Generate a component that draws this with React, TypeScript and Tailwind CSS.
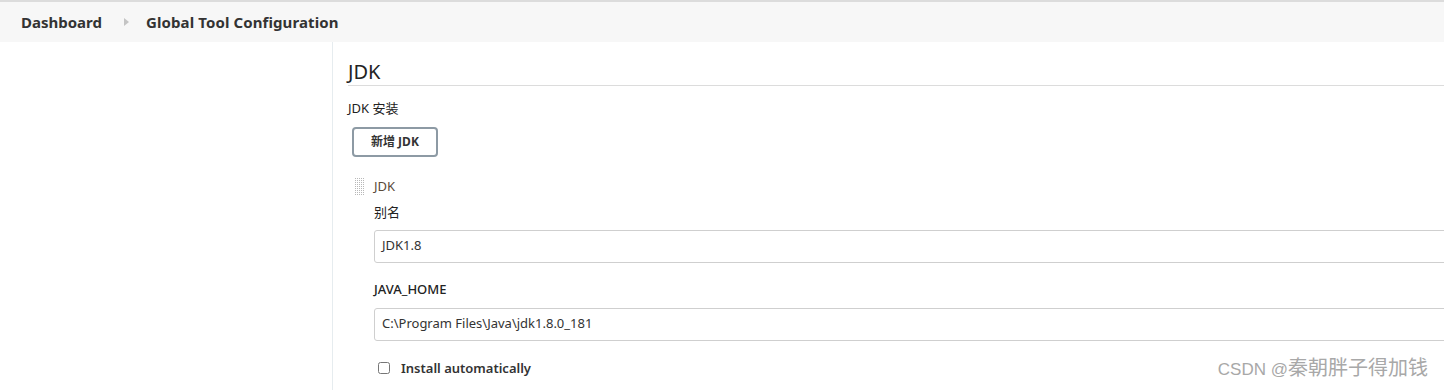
import { useState } from 'react';

/**
 * Global Tool Configuration — JDK section
 */
const font = "font-['Noto_Sans','Noto_Sans_CJK_SC',sans-serif]";

function DragHandle() {
  const dots = [];
  for (let r = 0; r < 9; r++) {
    for (let c = 0; c < 5; c++) {
      dots.push(<rect key={`${r}-${c}`} x={c * 2} y={r * 2} width={1} height={1} fill="#b8b8b8" />);
    }
  }
  return (
    <svg width="10" height="18" viewBox="0 0 10 18" className="shrink-0">
      {dots}
    </svg>
  );
}

export default function App() {
  const [auto, setAuto] = useState(false);

  return (
    <div className={`${font} relative w-[1444px] h-[390px] overflow-hidden bg-white text-[#333]`}>
      {/* Breadcrumb bar */}
      <header className="h-[42px] border-t-2 border-[#dcdcdc] bg-[#f7f7f7] flex items-center pl-[21px]">
        <span className="text-[15px] font-bold text-[#333]">Dashboard</span>
        <svg width="5" height="8" viewBox="0 0 5 8" className="ml-[22px] mr-[17px]">
          <path d="M0 0 L5 4 L0 8 Z" fill="#c4c4c4" />
        </svg>
        <span className="text-[15px] font-bold tracking-[0.1px] text-[#333]">Global Tool Configuration</span>
      </header>

      <div className="flex h-[348px]">
        {/* Side panel */}
        <aside className="w-[333px] shrink-0 border-r border-[#e6ecef]" />

        {/* Main */}
        <main className="flex-1 pl-[15px] pt-[17px]">
          <h2 className="text-[20px] leading-[26px] text-[#222] border-b border-[#dcdcdc]">JDK</h2>

          <div className="mt-[13px] text-[13px] leading-[18px] text-[#222]">JDK 安装</div>

          <button className="mt-[10px] ml-[4px] h-[30px] px-[17px] rounded-[4px] border-2 border-[#8d9aa4] bg-white text-[12px] font-bold text-[#333]">
            新增 JDK
          </button>

          <div className="mt-[20px] ml-[7px] flex items-center gap-[9px]">
            <DragHandle />
            <span className="text-[13px] text-[#5a4a3a]">JDK</span>
          </div>

          <div className="ml-[26px]">
            <div className="mt-[6px] text-[13px] leading-[18px] text-[#222]">别名</div>
            <div className="mt-[9px] -mr-[20px] h-[33px] border border-[#cfcfcf] rounded-[3px] flex items-center pl-[7px] text-[13px] text-[#333]">
              JDK1.8
            </div>

            <div className="mt-[17px] text-[13px] leading-[18px] font-medium text-[#222]">JAVA_HOME</div>
            <div className="mt-[10px] -mr-[20px] h-[33px] border border-[#cfcfcf] rounded-[3px] flex items-center pl-[7px] text-[13px] text-[#333]">
              C:\Program Files\Java\jdk1.8.0_181
            </div>

            <label className="mt-[18px] ml-[4px] flex items-center gap-[11px] cursor-pointer">
              <input
                type="checkbox"
                checked={auto}
                onChange={() => setAuto(!auto)}
                className="w-[12px] h-[12px] m-0"
              />
              <span className="text-[13px] font-semibold text-[#333]">Install automatically</span>
            </label>
          </div>
        </main>
      </div>

      {/* Watermark */}
      <div className="absolute right-[16px] bottom-[8px] flex items-baseline text-[#a8a8a8] font-['Liberation_Sans','Noto_Sans_CJK_SC',sans-serif]">
        <span className="text-[17px]">CSDN @</span>
        <span className="text-[20px] leading-[22px]">秦朝胖子得加钱</span>
      </div>
    </div>
  );
}
